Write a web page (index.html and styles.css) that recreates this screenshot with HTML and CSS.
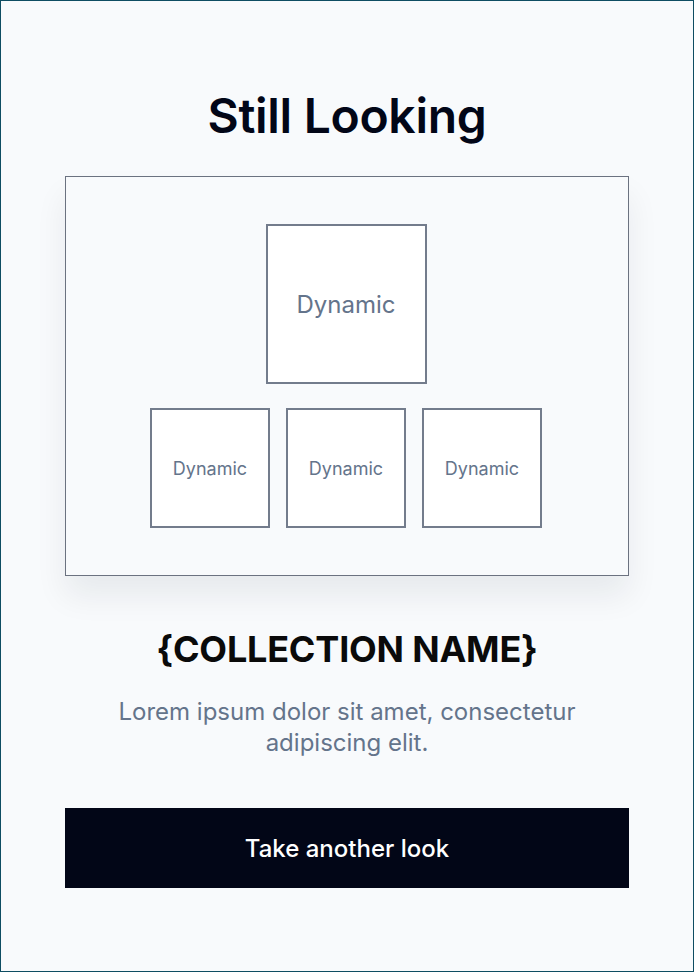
FILE: index.html
```html
<!DOCTYPE html>
<html lang="en">
<head>
<meta charset="utf-8">
<title>Still Looking</title>
<link rel="stylesheet" href="styles.css">
</head>
<body>
<main class="page">
  <h1 class="title">Still Looking</h1>
  <div class="frame">
    <div class="tile tile-lg">Dynamic</div>
    <div class="row">
      <div class="tile tile-sm">Dynamic</div>
      <div class="tile tile-sm">Dynamic</div>
      <div class="tile tile-sm">Dynamic</div>
    </div>
  </div>
  <h2 class="name">{COLLECTION NAME}</h2>
  <p class="desc">Lorem ipsum dolor sit amet, consectetur adipiscing elit.</p>
  <a class="btn" href="#">Take another look</a>
</main>
</body>
</html>
```

FILE: styles.css
```css
html, body {
  margin: 0;
  padding: 0;
}
body {
  background: #f8fafc;
  font-family: Inter, "Noto Sans", sans-serif;
}
.page {
  box-sizing: border-box;
  width: 694px;
  height: 972px;
  border: 1px solid #0e4d62;
  padding: 83px 0 0;
  display: flex;
  flex-direction: column;
  align-items: center;
}
.title {
  margin: 0;
  font-size: 48px;
  font-weight: 600;
  line-height: 64px;
  color: #020617;
  letter-spacing: -0.3px;
}
.frame {
  box-sizing: border-box;
  margin-top: 28px;
  width: 564px;
  height: 400px;
  padding: 0 2px 0 0;
  border: 1px solid #6b7280;
  background: #f8fafc;
  box-shadow: 0 20px 30px rgba(15, 23, 42, 0.07);
  display: flex;
  flex-direction: column;
  align-items: center;
  justify-content: center;
  gap: 24px;
}
.row {
  display: flex;
  gap: 16px;
}
.tile {
  box-sizing: border-box;
  background: #ffffff;
  border: 2px solid #737c8c;
  display: flex;
  align-items: center;
  justify-content: center;
  color: #64748b;
}
.tile-lg {
  width: 161px;
  height: 160px;
  font-size: 24px;
}
.tile-sm {
  width: 120px;
  height: 120px;
  font-size: 18px;
  padding-top: 0;
}
.name {
  margin: 51px 0 0;
  font-size: 36px;
  font-weight: 700;
  line-height: 44px;
  color: #0a0a0a;
  letter-spacing: -0.2px;
}
.desc {
  margin: 25px 0 0;
  max-width: 490px;
  text-align: center;
  font-size: 24px;
  line-height: 31px;
  color: #64748b;
}
.btn {
  margin-top: 50px;
  width: 564px;
  height: 80px;
  background: #020617;
  color: #ffffff;
  text-decoration: none;
  display: flex;
  align-items: center;
  justify-content: center;
  font-size: 24px;
  font-weight: 500;
}
```
